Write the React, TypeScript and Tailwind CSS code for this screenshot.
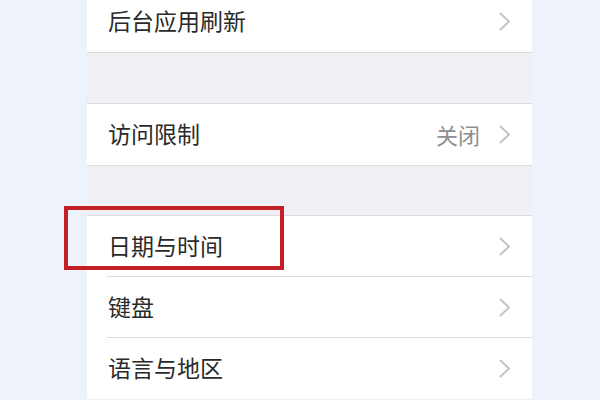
import React from "react";

const Chevron = () => (
  <svg width="12" height="19" viewBox="0 0 12 19" fill="none">
    <polyline points="1.5,1.5 10,9.5 1.5,17.5" stroke="#c3c3c8" strokeWidth="2" strokeLinecap="round" strokeLinejoin="round" />
  </svg>
);

const Row = ({ label, value, last }: { label: string; value?: string; last?: boolean }) => (
  <div className="relative flex h-[61px] shrink-0 items-center bg-white pl-[21px] pr-[21px]">
    <span className="flex-1 pb-[2px] text-[23px] leading-none text-[#2a2a2a]">{label}</span>
    {value && <span className="mr-[19px] pb-[2px] text-[22px] leading-none text-[#8e8e93]">{value}</span>}
    <Chevron />
    {!last && <div className="absolute bottom-0 left-[20px] right-0 h-px bg-[#dcdce0]" />}
  </div>
);

export default function App() {
  return (
    <div
      className="relative flex h-[400px] w-[600px] overflow-hidden bg-[#eef2fa]"
      style={{ fontFamily: '"Noto Sans CJK SC", "Noto Sans", sans-serif' }}
    >
      <div className="w-[87px] shrink-0 bg-[#eef2fa]" />
      <div className="flex w-[445px] shrink-0 flex-col bg-[#efeff4]">
        <div className="-mt-[9px] border-b border-[#d9d9de]">
          <Row label="后台应用刷新" last />
        </div>
        <div className="h-[50px] shrink-0" />
        <div className="border-y border-[#dcdce0]">
          <Row label="访问限制" value="关闭" last />
        </div>
        <div className="h-[49px] shrink-0" />
        <div className="border-t border-[#dcdce0]">
          <Row label="日期与时间" />
          <Row label="键盘" />
          <Row label="语言与地区" last />
        </div>
      </div>
      <div className="flex-1 bg-[#eef2fa]" />
      <div className="absolute left-[64px] top-[206px] h-[64px] w-[220px] border-[4px] border-[#c21f26]" />
    </div>
  );
}
